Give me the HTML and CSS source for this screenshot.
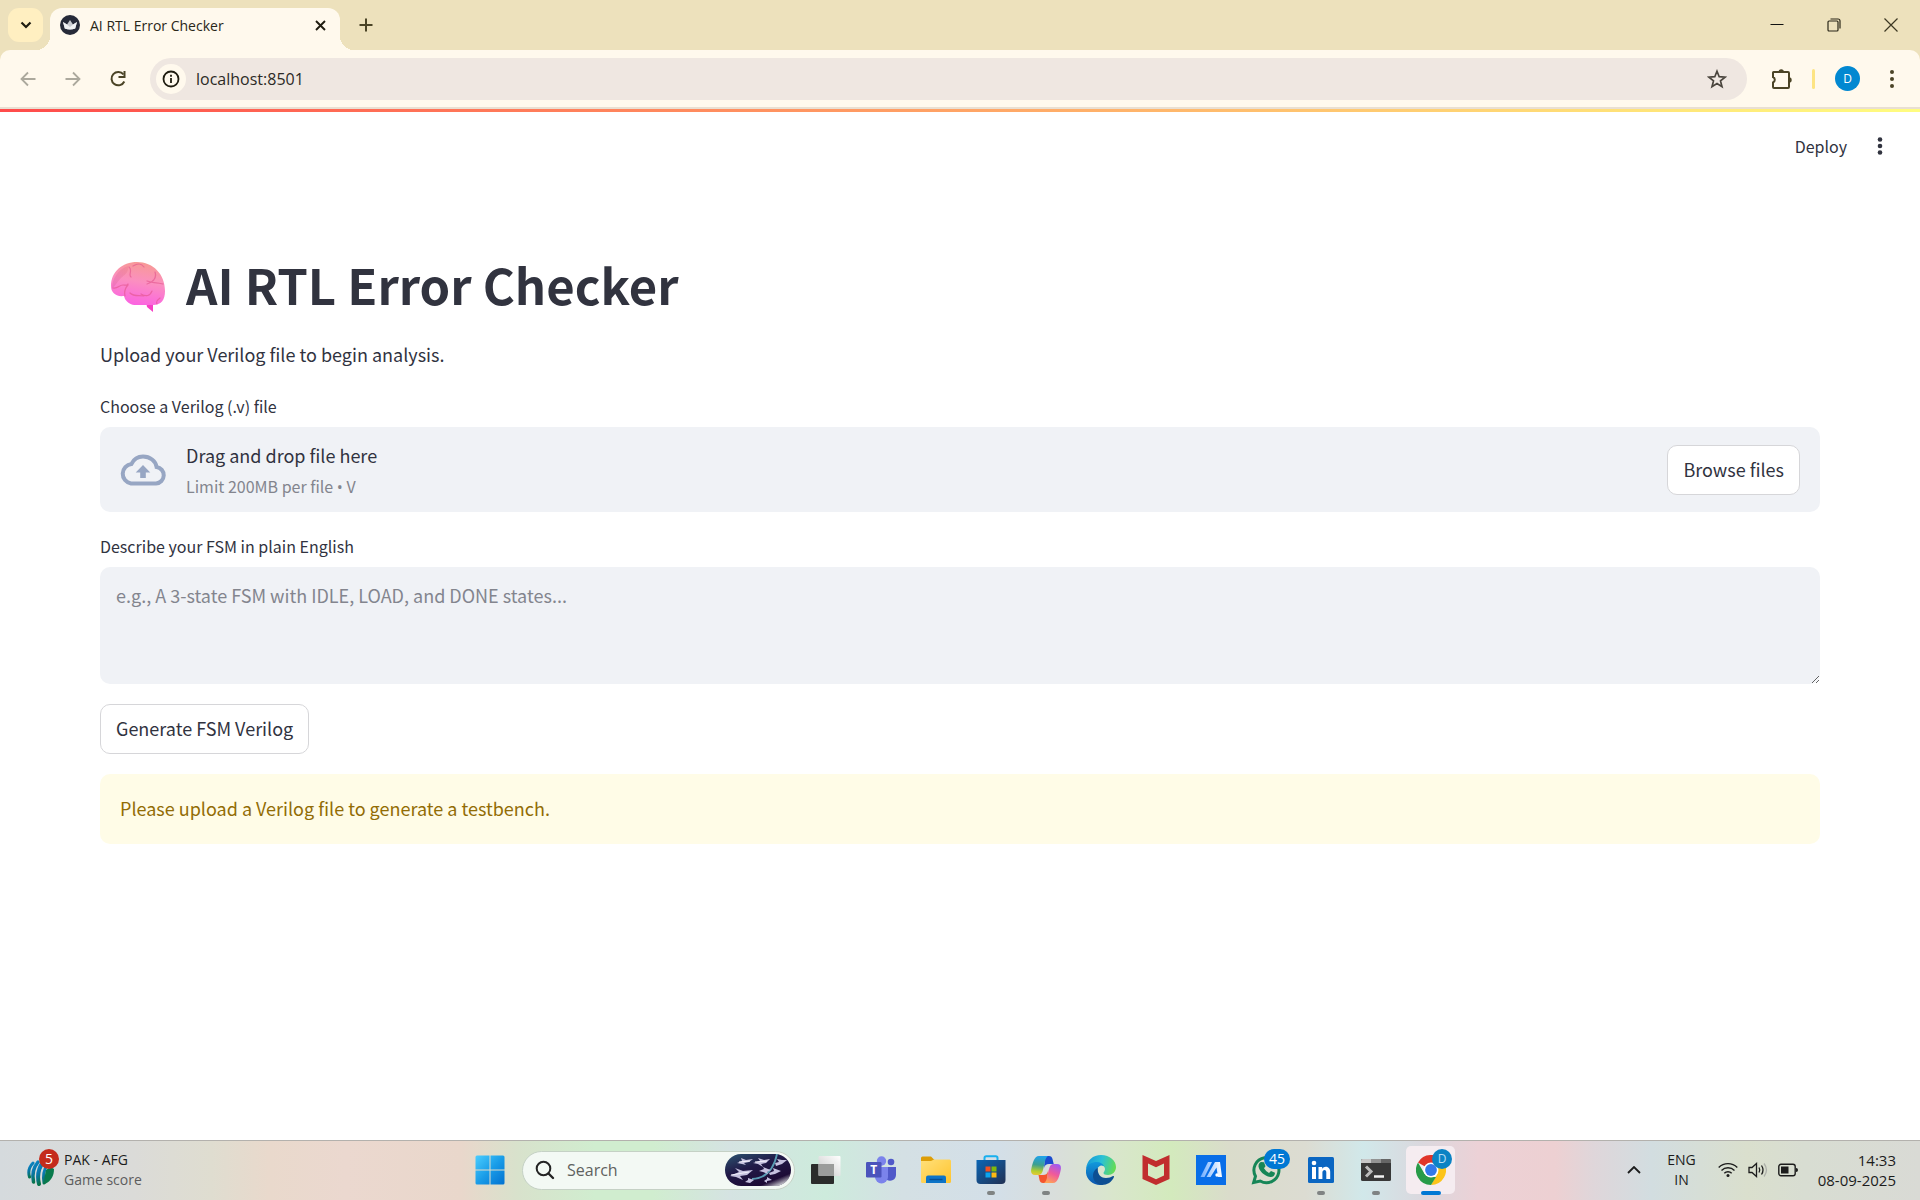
FILE: index.html
```html
<!DOCTYPE html>
<html lang="en">
<head>
<meta charset="utf-8">
<meta name="viewport" content="width=device-width, initial-scale=1">
<title>AI RTL Error Checker</title>
<link rel="stylesheet" href="styles.css">
</head>
<body>
<header class="browser">
  <div class="tabstrip">
    <button class="tab-search" aria-label="Search tabs"><svg width="12" height="8" viewBox="0 0 12 8"><path d="M1.5 1.5 6 6l4.500-4.500" fill="none" stroke="#1f1c10" stroke-width="2.200"/></svg></button>
    <div class="tab">
      <svg class="favicon" width="20" height="20" viewBox="0 0 20 20"><circle cx="10" cy="10" r="10" fill="#262a38"/><path d="M3 7l4 2.500L10 5l3 4.500L17 7l-1.800 6.500q-5.200 1.800-10.400 0z" fill="#c9cbd0"/><path d="M3 7l4 2.500 3 2.500 3-2.500L17 7l-1.800 6.500q-5.200 1.800-10.400 0z" fill="#f1f2f3"/></svg>
      <span class="tab-title">AI RTL Error Checker</span>
      <button class="tab-close" aria-label="Close tab"><svg width="11" height="11" viewBox="0 0 11 11"><path d="M1 1l9 9M10 1l-9 9" stroke="#1f1c10" stroke-width="1.900"/></svg></button>
    </div>
    <button class="new-tab" aria-label="New tab"><svg width="14" height="14" viewBox="0 0 14 14"><path d="M7 .5v13M.5 7h13" stroke="#4b4426" stroke-width="2"/></svg></button>
    <div class="window-controls">
      <button aria-label="Minimize"><svg width="14" height="14" viewBox="0 0 14 14"><path d="M.5 6.500h13" stroke="#111" stroke-width="1"/></svg></button>
      <button aria-label="Restore"><svg width="14" height="14" viewBox="0 0 14 14" fill="none" stroke="#2a2718" stroke-width="1.200"><rect x="1" y="3" width="10" height="10" rx="1"/><path d="M3.500 1h7.500a2 2 0 0 1 2 2v7.500"/></svg></button>
      <button aria-label="Close"><svg width="14" height="14" viewBox="0 0 14 14"><path d="M.5.500l13 13M13.500.500l-13 13" stroke="#3c3722" stroke-width="1.200"/></svg></button>
    </div>
  </div>
  <div class="toolbar">
    <button class="nav" aria-label="Back"><svg width="16" height="16" viewBox="0 0 16 16"><path d="M15.500 8H2M8 1.500 1.500 8 8 14.500" fill="none" stroke="#aca99d" stroke-width="1.800"/></svg></button>
    <button class="nav" aria-label="Forward"><svg width="16" height="16" viewBox="0 0 16 16"><path d="M.5 8H14M8 1.500 14.500 8 8 14.500" fill="none" stroke="#aca99d" stroke-width="1.800"/></svg></button>
    <button class="nav" aria-label="Reload"><svg width="18" height="18" viewBox="0 0 18 18"><path d="M15.300 11.500A6.700 6.700 0 1 1 14.500 4.500" fill="none" stroke="#4b4426" stroke-width="2"/><path d="M16.500 1v7h-7V6h5V1z" fill="#4b4426"/></svg></button>
    <div class="omnibox">
      <button class="site-info" aria-label="View site information"><svg width="18" height="18" viewBox="0 0 18 18"><circle cx="9" cy="9" r="7.500" fill="none" stroke="#1f1c10" stroke-width="1.800"/><path d="M9 8v5M9 4.800v1.900" stroke="#1f1c10" stroke-width="1.800"/></svg></button>
      <input class="address" type="text" value="localhost:8501" aria-label="Address">
      <button class="star" aria-label="Bookmark this page"><svg width="20" height="20" viewBox="0 0 20 20"><path d="M10 2.200l2.200 5.500 5.900.400-4.600 3.800 1.500 5.800L10 14.500l-5 3.200 1.500-5.800L1.900 8.100l5.900-.4z" fill="none" stroke="#4a453d" stroke-width="1.700"/></svg></button>
    </div>
    <button class="extensions" aria-label="Extensions"><svg width="22" height="22" viewBox="0 0 22 22"><path d="M2 4.500Q2 4 2.500 4H17q1 0 1 1v14q0 1-1 1H3q-1 0-1-1v-4.500a3 3 0 0 0 0-5.500z" fill="none" stroke="#4b4426" stroke-width="2"/><path d="M7.500 4a2.700 2.700 0 0 1 5.400 0zM18 9.300a2.700 2.700 0 0 1 0 5.400z" fill="#4b4426"/></svg></button>
    <span class="divider"></span>
    <button class="avatar" aria-label="Profile">D</button>
    <button class="menu" aria-label="Browser menu"><svg width="6" height="20" viewBox="0 0 6 20" fill="#4b4426"><circle cx="3" cy="3" r="2"/><circle cx="3" cy="10" r="2"/><circle cx="3" cy="17" r="2"/></svg></button>
  </div>
</header>

<main class="app">
  <div class="app-bar">
    <button class="deploy">Deploy</button>
    <button class="app-menu" aria-label="Main menu"><svg width="6" height="18" viewBox="0 0 6 18" fill="#31333f"><circle cx="3" cy="2.500" r="2.300"/><circle cx="3" cy="9" r="2.300"/><circle cx="3" cy="15.500" r="2.300"/></svg></button>
  </div>
  <div class="content">
    <h1><svg class="brain" width="56" height="52" viewBox="0 0 56 52" role="img" aria-label="Brain">
      <defs>
        <linearGradient id="b1" x1=".6" y1="0" x2=".4" y2="1"><stop offset="0" stop-color="#f79a94"/><stop offset=".45" stop-color="#fb8fc0"/><stop offset="1" stop-color="#fb62e2"/></linearGradient>
        <linearGradient id="b2" x1="1" y1="0" x2="0" y2="1"><stop offset="0" stop-color="#ec7f8c"/><stop offset="1" stop-color="#e064b4"/></linearGradient>
      </defs>
      <path d="M36 41l1 5 6 5V41z" fill="#f73fc5"/>
      <path d="M14 35C5 36 1 31 1 25 1 11 12 1 27 1c16 0 28 12 28 29 0 9-4 14-12 14H26c-5 0-8-2-11-6z" fill="url(#b1)"/>
      <path d="M2 28C2 18 8 8 18 5c1 7-4 9-7 12-4 4-6 8-9 11z" fill="url(#b2)" opacity=".45"/>
      <g fill="none" stroke="#e4568f" stroke-width="1.200" stroke-linecap="round" opacity=".65"><path d="M3 27c5 1 6-3 10-3 2 0 4 1 5-1M18 24c-3 3-4 6-3 11M23 5c5-3 8-3 11 1M19 6c4 3-1 8 2 10M45 11c2 6-2 10-8 12M37 20c4 2 9 1 16 3M31 33c5 3 9 2 11-3M20 32c4 4 9 2 14 3M50 37c-3 2-4 4-3 6"/></g>
    </svg><span>AI RTL Error Checker</span></h1>
    <p class="intro">Upload your Verilog file to begin analysis.</p>

    <label class="field-label" for="browse">Choose a Verilog (.v) file</label>
    <section class="dropzone">
      <svg class="cloud" width="46" height="32" viewBox="0 0 46 32"><path d="M11 29.500H36a8.300 8.300 0 0 0 .6-16.500C35.700 7 30 2.500 23 2.500c-5.200 0-9.300 2.800-11.500 7.400a9.900 9.900 0 0 0-.5 19.600z" fill="none" stroke="#97a6c3" stroke-width="4"/><path d="M23 11l7.300 7.500h-4.500V24h-5.600v-5.500h-4.500z" fill="#97a6c3"/></svg>
      <div class="drop-text"><span class="drop-title">Drag and drop file here</span><small>Limit 200MB per file <span class="bullet">•</span> V</small></div>
      <button class="button" id="browse">Browse files</button>
    </section>

    <label class="field-label" for="fsm">Describe your FSM in plain English</label>
    <textarea class="fsm" id="fsm" placeholder="e.g., A 3-state FSM with IDLE, LOAD, and DONE states..."></textarea>

    <button class="button generate">Generate FSM Verilog</button>
    <div class="alert" role="alert">Please upload a Verilog file to generate a testbench.</div>
  </div>
</main>

<footer class="taskbar">
  <button class="widget">
    <span class="widget-icon"><svg width="28" height="28" viewBox="0 0 28 28"><defs><linearGradient id="icc" x1="0" y1="0" x2=".3" y2="1"><stop offset="0" stop-color="#0d8cd0"/><stop offset=".5" stop-color="#0876a8"/><stop offset="1" stop-color="#087548"/></linearGradient></defs><g fill="none" stroke="url(#icc)" stroke-linecap="round"><path d="M6 5C2 9 1 14 2.500 19" stroke-width="3"/><path d="M11 4C6 10 5 17 6.500 24" stroke-width="3.500"/><path d="M16 4c-5 7-6 14-4 22" stroke-width="4"/><path d="M20 7c-4 6-4 12-3 18" stroke-width="3"/></g><path d="M19 12c4-3 7-2 8-1 0 7-3 12-9 15-1-5 0-10 1-14z" fill="#087a4c"/></svg><span class="count">5</span></span>
    <span class="two-lines"><span>PAK - AFG</span><span class="muted">Game score</span></span>
  </button>

  <nav class="dock" aria-label="Taskbar">
    <button class="task" aria-label="Start"><svg width="30" height="30" viewBox="0 0 30 30"><defs><linearGradient id="win" gradientUnits="userSpaceOnUse" x1="0" y1="0" x2="30" y2="30"><stop offset="0" stop-color="#4ccfff"/><stop offset=".5" stop-color="#1a9de8"/><stop offset="1" stop-color="#0070d0"/></linearGradient></defs><g fill="url(#win)"><path d="M2 .5h12.500v14H.5V2Q.5.500 2 .5zM15.500.500H28q1.500 0 1.500 1.500v12.500h-14zM.5 15.500h14v14H2Q.5 29.500.500 28zM15.500 15.500h14V28q0 1.500-1.500 1.500H15.500z"/></g></svg></button>
    <label class="search">
      <svg width="20" height="20" viewBox="0 0 20 20"><circle cx="8.500" cy="8.500" r="6.800" fill="none" stroke="#242424" stroke-width="2"/><path d="M13.500 13.500l4.500 4.500" stroke="#242424" stroke-width="2.400" stroke-linecap="round"/></svg>
      <input type="text" placeholder="Search" aria-label="Search">
      <svg class="search-art" width="66" height="32" viewBox="0 0 66 32"><defs><linearGradient id="sky" x1="0" y1="0" x2=".7" y2="1"><stop offset="0" stop-color="#2c5470"/><stop offset=".45" stop-color="#211a48"/><stop offset="1" stop-color="#1c0730"/></linearGradient><linearGradient id="edge-fade" x1=".5" y1=".4" x2="1" y2="1"><stop offset=".6" stop-color="#f3faf7" stop-opacity="0"/><stop offset=".9" stop-color="#f3faf7"/></linearGradient></defs><rect width="66" height="32" rx="16" fill="url(#sky)"/><path d="M27 25Q47 24 52 0" fill="none" stroke="#599ab2" stroke-width="1.800"/><g id="planes" fill="#c6c1df"><path d="M12 9l5-2-1-3 5 2 7-1-4 3-5 1 2 2-4-1zM28 9l7-2-2-3 6 2 6-1-4 4-5 1 2 3-5-3zM5 22l9-4-4-4 8 3 10-1-6 5-7 1 3 4-7-3zM34 17l5-2-1-2 5 2 3 1-4 2 1 2-5-2zM44 19l5-2-1-3 8 3-6 3-5 1zM50 9l4-1-2-3 5 1 5 0-5 4-6 2zM20 28l3-2v-2l6 2-4 3zM39 27l3-2v-2l5 3-5 1v2z"/></g><path d="M6 21l18-3M30 8l12-1M14 8l11-1" stroke="#f1effb" stroke-width="1.200"/><rect width="66" height="32" rx="16" fill="url(#edge-fade)"/></svg>
    </label>
    <button class="task first" aria-label="Task view"><svg width="30" height="28" viewBox="0 0 30 28"><defs><linearGradient id="tv" x1="0" y1="1" x2="1" y2="0"><stop offset="0" stop-color="#c9c9c9"/><stop offset="1" stop-color="#fff"/></linearGradient></defs><rect y="8" width="23" height="20" rx="1" fill="#2b2c2b"/><rect x="7.500" y="0" width="22" height="20" rx="1" fill="url(#tv)"/><path d="M7.500 8H23v12H8.500q-1 0-1-1z" fill="#9b9c9b"/></svg></button>
    <button class="task" aria-label="Teams"><svg width="30" height="28" viewBox="0 0 30 28"><circle cx="25" cy="6" r="3.300" fill="#5059c9"/><circle cx="15.500" cy="5" r="4.700" fill="#7b83eb"/><path d="M19 11h11v8a6 6 0 0 1-9 5z" fill="#5059c9"/><path d="M9 11h13v10a6.500 6.500 0 0 1-13 0z" fill="#7b83eb"/><rect y="6" width="15.500" height="15.500" rx="1.200" fill="#4b53bc"/><text x="7.700" y="18" text-anchor="middle" class="glyph">T</text></svg></button>
    <button class="task" aria-label="File Explorer"><svg width="30" height="28" viewBox="0 0 30 28"><defs><linearGradient id="fold" x1="0" y1="0" x2="1" y2="1"><stop offset="0" stop-color="#ffe07a"/><stop offset="1" stop-color="#ffc42e"/></linearGradient></defs><path d="M0 2q0-1.500 1.500-1.500H10L13.500 4H28v8H0z" fill="#dd9d07"/><path d="M0 5h10l3-1.500h15.500Q30 3.500 30 5v20.500q0 1.500-1.500 1.500h-27Q0 27 0 25.500z" fill="url(#fold)"/><path d="M5 27v-5.500q0-2 2-2h16q2 0 2 2V27z" fill="#0d74c7"/><path d="M8.500 23.500h13" stroke="#064f94" stroke-width="1.400"/></svg></button>
    <button class="task running" aria-label="Store"><svg width="30" height="30" viewBox="0 0 30 30"><defs><linearGradient id="store" x1="0" y1="0" x2="1" y2="1"><stop offset="0" stop-color="#0b66b5"/><stop offset="1" stop-color="#213053"/></linearGradient></defs><path d="M8.500 6V3q0-1.700 1.700-1.700h9.600q1.700 0 1.700 1.700v3" fill="none" stroke="#19b0ee" stroke-width="2"/><path d="M.5 5h29v20q0 4-4 4h-21q-4 0-4-4z" fill="url(#store)"/><path d="M9.500 11.500h5v5h-5z" fill="#f15122"/><path d="M15.500 11.500h5v5h-5z" fill="#80b90a"/><path d="M9.500 17.500h5v5h-5z" fill="#0ba5ef"/><path d="M15.500 17.500h5v5h-5z" fill="#fdb912"/></svg></button>
    <button class="task running" aria-label="Copilot"><svg width="30" height="28" viewBox="0 0 30 28"><defs><linearGradient id="cpl" x1=".3" y1="0" x2=".2" y2="1"><stop offset="0" stop-color="#20a2e8"/><stop offset=".45" stop-color="#3c9f90"/><stop offset=".8" stop-color="#b8cf2c"/><stop offset="1" stop-color="#e7c83a"/></linearGradient><linearGradient id="cpr" x1=".7" y1="0" x2=".3" y2="1"><stop offset="0" stop-color="#a15af0"/><stop offset=".5" stop-color="#f0599b"/><stop offset="1" stop-color="#ffa357"/></linearGradient></defs><path d="M14 0h4c2 0 3 1 3.500 3l1.200 5H18c-3 0-4 1-5 4z" fill="#1a4bcf"/><path d="M16 27h-4c-2 0-3-1-3.500-3l-1-5H12c3 0 4-1 5-4z" fill="#f4552f"/><path d="M8 0h9c-3 2-3 6-4.500 12S10 19 7 19H4c-4 0-4.500-3-3.500-7S3 0 8 0z" fill="url(#cpl)"/><path d="M22 27h-9c3-2 3-6 4.500-12S20 8 23 8h3c4 0 4.500 3 3.500 7S27 27 22 27z" fill="url(#cpr)"/></svg></button>
    <button class="task" aria-label="Edge"><svg width="30" height="30" viewBox="0 0 30 30"><defs><linearGradient id="ed1" x1="0" y1=".3" x2="1" y2=".5"><stop offset="0" stop-color="#1698d8"/><stop offset=".5" stop-color="#2bc1d6"/><stop offset="1" stop-color="#65dc53"/></linearGradient><linearGradient id="ed2" x1="0" y1="0" x2="0" y2="1"><stop offset="0" stop-color="#1199dc"/><stop offset="1" stop-color="#0b55ad"/></linearGradient></defs><path d="M0 14C1 5 7 0 15 0c9 0 15 6 15 12 0 5-4 8-8 8-3 0-4.500-1-4.500-2s1.500-2 1.500-4-2-4-5-4C8 10 3 11 0 14z" fill="url(#ed1)"/><path d="M0 15C1 9 6 7 11 7c3 0 6 2 7 4-4-2-8 2-7 7 1 6 6 8 10 7-3 4-4 5-7 5C6 30-1 23 0 15z" fill="url(#ed2)"/><path d="M12 13c-1 5 2 10 8 10 3 0 5-1 7-2 1 0 1 0 1 1-2 5-7 8-12 8-7-1-9-6-9-9 0-4 2-7 5-8z" fill="#0d4f93"/></svg></button>
    <button class="task" aria-label="McAfee"><svg width="28" height="30" viewBox="0 0 28 30"><path d="M.5 0L14 6 27.500 0v24L14 30 .5 24zM6 8.500V20.500l8 3.700 8-3.700V8.500l-8 3.700z" fill="#c12d2e" fill-rule="evenodd"/></svg></button>
    <button class="task" aria-label="MyASUS"><svg width="30" height="30" viewBox="0 0 30 30"><defs><linearGradient id="asus" x1="1" y1="0" x2="0" y2="0"><stop offset="0" stop-color="#fff"/><stop offset="1" stop-color="#70adff"/></linearGradient></defs><rect width="30" height="30" fill="#086ee8"/><path d="M12 7h4L8.500 22h-4zM19 7h5l2 15h-4l-1.500-9.500L14.500 22h-4z" fill="url(#asus)"/><circle cx="21" cy="20" r="1.700" fill="#fff"/></svg></button>
    <button class="task" aria-label="WhatsApp"><svg width="30" height="30" viewBox="0 0 30 30"><path d="M2.700 27.500l1.800-6.300A12.500 12.500 0 1 1 9.200 26z" fill="none" stroke="#168657" stroke-width="3"/><path d="M10 7l3 .300 1.500 4-1.500 2q2 3.500 5 4.700l2-2 4 1.800c0 3-2.300 4.500-4.700 4.200C13 21 8 15.500 7.500 11.500 7.400 9 8.500 7.500 10 7z" fill="#168657"/></svg><span class="badge">45</span></button>
    <button class="task running" aria-label="LinkedIn"><svg width="26" height="26" viewBox="0 0 26 26"><rect width="26" height="26" rx="1.500" fill="#0a66c2"/><path d="M4 10h4v12H4zM10.500 10h3.700v1.800c2-3.500 8-2.500 8 3V22h-3.900v-6.500c0-3.500-3.900-3-3.900 0V22h-3.900z" fill="#fff"/><circle cx="6" cy="6" r="2.300" fill="#fff"/></svg></button>
    <button class="task running" aria-label="Terminal"><svg width="30" height="24" viewBox="0 0 30 24"><rect y="1" width="30" height="22" rx="1.500" fill="#383838"/><path d="M0 5V2.500Q0 1 1.500 1H10v4z" fill="#c7c7c7"/><path d="M10 1h10v4H10z" fill="#939393"/><path d="M20 1h8.500Q30 1 30 2.500V5H20z" fill="#666"/><path d="M5 8.500l5 5-5 5" fill="none" stroke="#bcbcbc" stroke-width="3"/><path d="M13 18.500h10" stroke="#f2f2f2" stroke-width="2.500"/></svg></button>
    <button class="task active" aria-label="Chrome"><svg width="30" height="30" viewBox="0 0 30 30"><path d="M15 15L2 7.500A15 15 0 0 1 28 7.500z" fill="#e13429"/><path d="M15 0a15 15 0 0 1 13 7.500H15z" fill="#e13429"/><path d="M28 7.500A15 15 0 0 1 15 30L21.500 18.800 21 7.500z" fill="#fcc419"/><path d="M2 7.500L8.500 18.800 15 22h5l-5 8A15 15 0 0 1 2 7.500z" fill="#289b48"/><circle cx="15" cy="15" r="7.500" fill="#fff"/><circle cx="15" cy="15" r="5.900" fill="#3279ea"/></svg><span class="badge profile">D</span></button>
  </nav>

  <div class="tray">
    <button aria-label="Show hidden icons"><svg width="14" height="8" viewBox="0 0 14 8"><path d="M1 7l6-6 6 6" fill="none" stroke="#1c1c1c" stroke-width="1.800"/></svg></button>
    <button class="two-lines language"><span>ENG</span><span>IN</span></button>
    <button class="status" aria-label="Network, volume, battery">
      <svg width="20" height="16" viewBox="0 0 20 16" fill="none" stroke="#1c1c1c" stroke-width="1.400"><path d="M.7 5.500a13.200 13.200 0 0 1 18.600 0M3.500 8.500a9.200 9.200 0 0 1 13 0M6.300 11.300a5.200 5.200 0 0 1 7.400 0"/><circle cx="10" cy="13.500" r="1.500" fill="#1c1c1c" stroke="none"/></svg>
      <svg width="20" height="16" viewBox="0 0 20 16" fill="none" stroke="#1c1c1c" stroke-width="1.300"><path d="M1 5.500h3L8.500 1.500v13L4 10.500H1z"/><path d="M11 5.500q1.500 2.500 0 5M13.500 3.500q3 4.500 0 9"/><path d="M16 1.500q5 6.500 0 13" stroke="#aeb0aa"/></svg>
      <svg width="20" height="14" viewBox="0 0 20 14"><rect x=".8" y="1.300" width="16.400" height="11.400" rx="2.200" fill="none" stroke="#1c1c1c" stroke-width="1.400"/><rect x="3" y="3.500" width="7.500" height="7" fill="#1c1c1c"/><path d="M18 5q2 0 2 2t-2 2z" fill="#1c1c1c"/></svg>
    </button>
    <button class="two-lines clock"><span>14:33</span><span>08-09-2025</span></button>
  </div>
</footer>
</body>
</html>
```
FILE: styles.css
```css
* { box-sizing: border-box; }

:root {
  --ui: "Open Sans", "Noto Sans", sans-serif;
  --app: "Noto Sans CJK SC", "Noto Sans", sans-serif;
  --ink: #31333f;
  --panel: #f0f2f6;
}

body {
  margin: 0;
  min-height: 100vh;
  display: flex;
  flex-direction: column;
  background: #fff;
  font-family: var(--ui);
}

button {
  padding: 0;
  border: 0;
  background: none;
  color: inherit;
  font: inherit;
  display: flex;
  align-items: center;
  justify-content: center;
}

input, textarea { font: inherit; border: 0; outline: 0; }
svg { display: block; flex: none; }

/* Browser frame */
.browser {
  background: #ede1bc;
  border-bottom: 2px solid #e9dfd2;
}

.tabstrip {
  display: flex;
  height: 50px;
  padding: 0 1px 0 8px;
}

.tab-search {
  width: 35px;
  height: 34px;
  margin-top: 8px;
  border-radius: 11px;
  background: #ffefc1;
}

.tab {
  position: relative;
  display: flex;
  align-items: center;
  gap: 10px;
  width: 290px;
  margin: 8px 0 0 7px;
  padding: 0 14px 8px 10px;
  border-radius: 12px 12px 0 0;
  background: #fff9ed;
}

.tab::before,
.tab::after {
  content: "";
  position: absolute;
  bottom: 0;
  width: 14px;
  height: 14px;
}

.tab::before { left: -14px; background: radial-gradient(circle at 0 0, transparent 14px, #fff9ed 14px); }
.tab::after { right: -14px; background: radial-gradient(circle at 100% 0, transparent 14px, #fff9ed 14px); }

.tab-title { flex: 1; font-size: 14px; color: #292719; }
.tab-close { width: 12px; height: 12px; }
.new-tab { width: 34px; height: 34px; margin: 8px 0 0 9px; }

.window-controls {
  display: flex;
  align-items: center;
  margin-left: auto;
}

.window-controls button { width: 57px; height: 48px; }

.toolbar {
  display: flex;
  align-items: center;
  height: 57px;
  padding: 0 13px 0 5px;
  border-radius: 10px 10px 0 0;
  background: #fff9ed;
}

.nav { width: 45px; height: 40px; }

.omnibox {
  display: flex;
  align-items: center;
  flex: 1;
  height: 42px;
  margin-left: 10px;
  padding: 0 20px 0 6px;
  border-radius: 21px;
  background: #efe7e1;
}

.site-info {
  width: 30px;
  height: 30px;
  border-radius: 50%;
  background: #fff9ed;
}

.address {
  flex: 1;
  min-width: 0;
  padding: 0 10px;
  background: none;
  color: #2c2a26;
  font-size: 16px;
}

.extensions { width: 22px; margin-left: 24px; }
.divider { width: 3px; height: 20px; margin-left: 19px; border-radius: 2px; background: #fde483; }

.avatar {
  width: 25px;
  height: 25px;
  margin-left: 20px;
  border-radius: 50%;
  background: #0288d1;
  color: #fff;
  font-size: 12px;
}

.menu { width: 30px; margin-left: 17px; }

/* Application page */
.app {
  flex: 1;
  font-family: var(--app);
  color: var(--ink);
  font-size: 18px;
  line-height: 30px;
}

.app::before {
  content: "";
  display: block;
  height: 3px;
  background: linear-gradient(90deg, #ff4b4b, #fffd80);
}

.app-bar {
  display: flex;
  align-items: center;
  justify-content: flex-end;
  height: 68px;
  padding-right: 37px;
}

.deploy { font-size: 16px; }
.app-menu { margin-left: 30px; }

.content { padding: 71px 100px 40px; }

h1 {
  display: flex;
  align-items: center;
  gap: 20px;
  margin: 0 0 22px;
  padding-left: 10px;
  font-size: 49px;
  line-height: 66px;
  font-weight: 700;
}

.brain { margin-top: 6px; }
.intro { margin: 0 0 23px; }

.field-label {
  display: block;
  margin-bottom: 7px;
  font-size: 16px;
  line-height: 28px;
}

.dropzone {
  display: flex;
  align-items: center;
  min-height: 85px;
  margin-bottom: 20px;
  padding: 10px 20px;
  border-radius: 10px;
  background: var(--panel);
}

.drop-text {
  display: flex;
  flex-direction: column;
  gap: 2px;
  flex: 1;
  margin-left: 20px;
}

.drop-text small {
  color: #83858e;
  font-size: 16px;
  line-height: 28px;
}

.bullet { font-family: var(--ui); line-height: 20px; }

.button {
  height: 50px;
  padding: 0 15px 2px;
  border: 1px solid #d6d6d9;
  border-radius: 10px;
  background: #fff;
}

.fsm {
  display: block;
  width: 100%;
  height: 117px;
  margin-bottom: 20px;
  padding: 13px 16px;
  border-radius: 10px;
  background: var(--panel);
  color: var(--ink);
  resize: vertical;
}

.fsm::placeholder { color: #83858e; opacity: 1; }

.generate { margin-bottom: 20px; }

.alert {
  padding: 19px 20px 21px;
  border-radius: 10px;
  background: #fffce7;
  color: #926c05;
}

/* Taskbar */
.taskbar {
  display: grid;
  grid-template-columns: 1fr auto 1fr;
  align-items: center;
  height: 60px;
  padding-bottom: 2px;
  border-top: 1px solid #b3b1ad;
  background: linear-gradient(90deg, #d5dadd 0%, #dbdbd8 7%, #dfddd0 11%, #e9d9cc 14%, #ebd8cf 18%, #e9d7cb 24%, #d8e2cc 27%, #d0edcf 31%, #d0edcf 34%, #d5e3e2 38%, #cdebdc 43%, #d4e0e4 47%, #d3dfe8 52%, #d9dedb 55%, #d9e6cc 58%, #d3eabd 61%, #dadccb 64%, #dcdcd2 68%, #d1e8ea 71%, #dad8de 74%, #ecd1d6 77%, #edd0d2 81%, #dfd6da 83%, #d2dde0 86%, #dadfcd 91%, #d8ddd2 94%, #d9dad5 100%);
  color: #1c1c1c;
  font-size: 14px;
}

.widget { justify-self: start; gap: 9px; margin-left: 27px; }
.widget-icon { position: relative; padding-top: 4px; }

.count {
  position: absolute;
  top: -5px;
  left: 12px;
  width: 20px;
  height: 20px;
  border-radius: 50%;
  background: #c42b1c;
  color: #fff;
  line-height: 20px;
}

.two-lines {
  display: flex;
  flex-direction: column;
  align-items: flex-start;
  line-height: 20px;
}

.muted { color: #5d5d5d; }
.dock { display: flex; align-items: center; }

.task {
  position: relative;
  width: 55px;
  height: 58px;
}

.first { margin-left: 3px; }

.running::after,
.active::after {
  content: "";
  position: absolute;
  bottom: 4px;
  width: 8px;
  height: 4px;
  border-radius: 2px;
  background: #7f8383;
}

.active::after { width: 20px; background: #0078d4; }

.active::before {
  content: "";
  position: absolute;
  inset: 5px 3px;
  border-radius: 5px;
  background: #f5ecf0;
}

.active svg { position: relative; }

.badge {
  position: absolute;
  top: 8px;
  right: 3px;
  width: 26px;
  height: 20px;
  border-radius: 10px;
  background: #0078d4;
  color: #fff;
  font-size: 14px;
  line-height: 20px;
}

.profile {
  right: 6px;
  width: 20px;
  background: #0b83c4;
  color: #b9def5;
  font-size: 12px;
}

.glyph { fill: #fff; font: 700 12px var(--ui); }

.search {
  display: flex;
  align-items: center;
  width: 273px;
  height: 39px;
  margin-left: 5px;
  padding: 0 3px 0 12px;
  border: 1px solid #c5d1c5;
  border-radius: 20px;
  background: #f3f9f4;
}

.search input {
  flex: 1;
  min-width: 0;
  padding: 0 12px;
  background: none;
  font-size: 16px;
}

.search input::placeholder { color: #5f625f; opacity: 1; }

.tray {
  display: flex;
  align-items: center;
  justify-content: flex-end;
  padding-right: 24px;
}

.language { align-items: center; margin-left: 26px; }
.status { gap: 10px; margin-left: 22px; }
.clock { align-items: flex-end; margin-left: 20px; font-size: 15px; }
```
